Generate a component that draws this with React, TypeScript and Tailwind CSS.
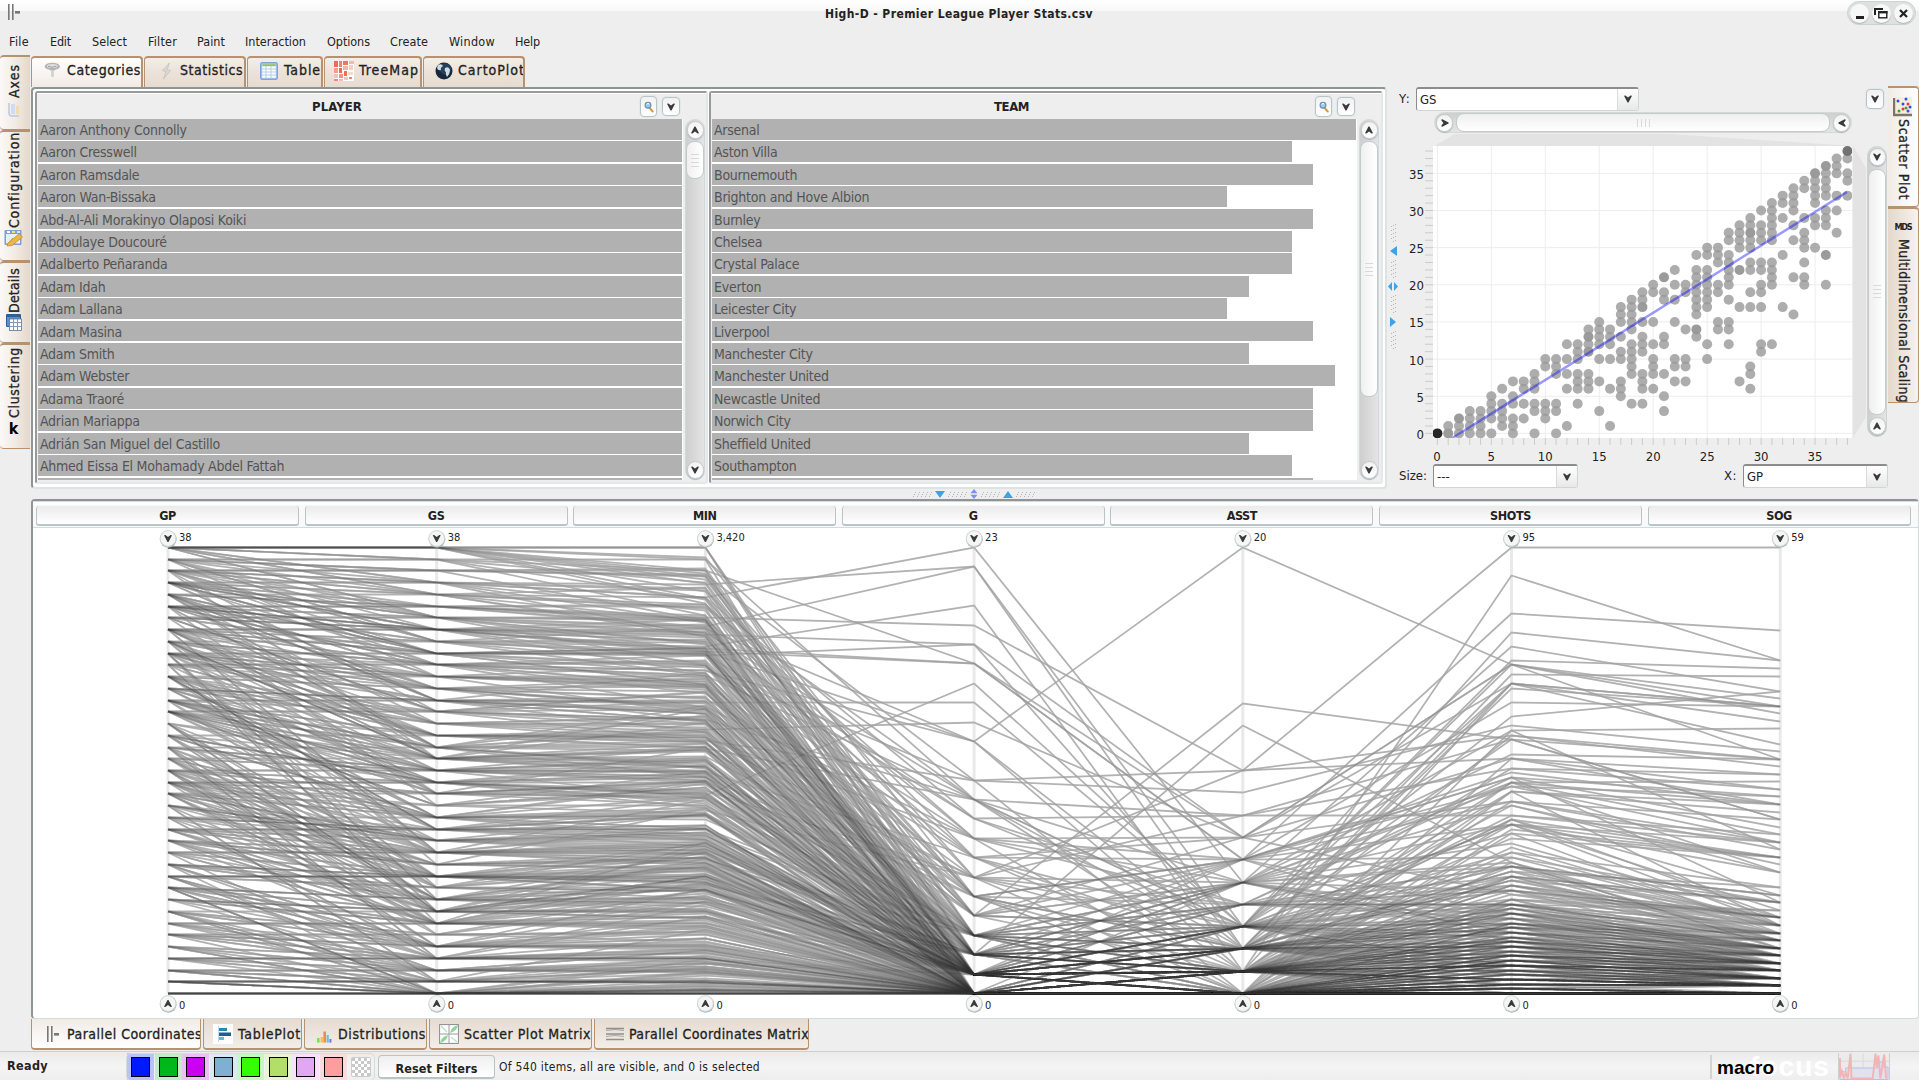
import React, { useLayoutEffect, useRef } from "react";

/* ---------- text that keeps a given run length ---------- */
function T({ w, vertical, className = "", children }: { w?: number; vertical?: boolean; className?: string; children: string }) {
  const ref = useRef<HTMLSpanElement>(null);
  useLayoutEffect(() => {
    const el = ref.current;
    if (!el || !w) return;
    el.style.letterSpacing = "0px";
    const box = el.getBoundingClientRect();
    const natural = vertical ? box.height : box.width;
    el.style.letterSpacing = `${(w - natural) / children.length}px`;
  }, [w, vertical, children]);
  return (
    <span ref={ref} className={`inline-block shrink-0 whitespace-nowrap ${className}`}>
      {children}
    </span>
  );
}

/* ---------- data ---------- */
let seed = 20201;
const rnd = () => {
  seed = (seed * 1664525 + 1013904223) % 4294967296;
  return seed / 4294967296;
};

const startsByGames: number[][] = [
  [0], [0, 1], [0, 1, 2], [0, 1, 2, 3], [0, 1, 2, 3], [0, 2, 3, 4, 5], [1, 2, 3, 4, 6],
  [0, 1, 2, 4, 5, 7], [2, 4, 6, 7], [0, 3, 4, 6, 7, 8], [2, 3, 4, 9, 10], [0, 3, 4, 8, 9, 10],
  [1, 6, 8, 10, 12], [4, 6, 7, 8, 10, 11, 12], [6, 7, 8, 11, 12, 13, 14], [3, 7, 10, 12, 13, 14, 15],
  [1, 6, 10, 12, 13, 14], [5, 6, 7, 10, 11, 13, 15, 16, 17], [4, 8, 9, 10, 11, 12, 14, 15, 16, 17, 18],
  [4, 6, 7, 8, 11, 12, 13, 15, 17, 18, 19], [6, 8, 9, 10, 12, 15, 19, 20], [3, 5, 8, 12, 13, 18, 19, 21],
  [7, 9, 10, 15, 18, 20, 22], [7, 9, 10, 14, 19, 20], [13, 14, 16, 17, 18, 19, 20, 21, 22, 24],
  [10, 12, 17, 18, 19, 20, 21, 22, 24, 25], [14, 15, 19, 20, 23, 24, 25],
  [12, 14, 15, 18, 20, 21, 22, 23, 24, 26, 27], [7, 17, 22, 25, 26, 27, 28],
  [6, 8, 9, 17, 19, 22, 23, 25, 26, 27, 28, 29], [11, 12, 17, 19, 20, 22, 23, 26, 27, 28, 30],
  [12, 20, 21, 22, 23, 26, 27, 28, 29, 30, 31], [17, 24, 29, 31, 32], [16, 21, 26, 28, 30, 31, 32, 33],
  [20, 21, 23, 25, 26, 27, 29, 33, 34], [25, 28, 29, 31, 32, 33, 34, 35],
  [20, 24, 28, 29, 30, 32, 33, 34, 35, 36], [27, 30, 32, 35, 36, 37], [32, 34, 35, 37, 38],
];

// games, starts, minutes, goals, assists, shots, shots on goal
type Row = [number, number, number, number, number, number, number];
const leaders: Row[] = [
  [35, 34, 3034, 23, 5, 74, 40], [36, 35, 3138, 22, 3, 77, 44], [38, 32, 2812, 22, 2, 66, 38],
  [33, 30, 2660, 20, 1, 89, 44], [34, 33, 2884, 19, 10, 95, 59], [29, 29, 2589, 18, 2, 68, 42],
  [35, 31, 2753, 18, 7, 66, 38], [38, 37, 3241, 17, 6, 81, 48], [31, 31, 2645, 17, 7, 70, 38],
  [32, 31, 2625, 17, 6, 62, 38], [25, 18, 1520, 16, 3, 59, 40], [34, 25, 2231, 15, 3, 71, 43],
  [34, 21, 2027, 14, 7, 70, 39], [35, 32, 2800, 13, 20, 70, 31], [36, 30, 2620, 13, 1, 66, 36],
  [30, 28, 2480, 13, 2, 65, 38], [33, 21, 1942, 11, 9, 57, 32], [30, 28, 2479, 11, 10, 55, 31],
  [38, 38, 3175, 4, 13, 54, 23], [36, 34, 3111, 2, 12, 28, 8], [27, 22, 1950, 6, 10, 50, 29],
  [37, 31, 2766, 10, 3, 70, 37], [36, 36, 3210, 11, 0, 56, 35], [38, 38, 3330, 10, 8, 54, 31],
  [37, 34, 2960, 10, 5, 51, 31], [33, 28, 2440, 10, 2, 55, 30], [31, 24, 2100, 10, 3, 48, 27],
  [29, 22, 1880, 10, 1, 45, 28], [38, 35, 3040, 9, 4, 46, 26], [32, 31, 2700, 9, 8, 48, 29],
  [37, 30, 2600, 9, 3, 66, 33], [30, 26, 2200, 8, 4, 45, 21], [34, 33, 2870, 8, 0, 43, 25],
  [28, 22, 1960, 8, 6, 41, 23], [35, 29, 2500, 8, 5, 44, 26], [38, 34, 2980, 8, 7, 50, 25],
  [27, 26, 2260, 7, 6, 46, 22], [33, 31, 2790, 7, 3, 54, 23], [24, 19, 1700, 7, 2, 38, 21],
  [36, 35, 3090, 7, 7, 41, 20], [29, 27, 2380, 6, 8, 38, 20], [22, 18, 1560, 6, 3, 36, 18],
  [31, 20, 1860, 6, 2, 43, 24], [37, 36, 3200, 6, 5, 40, 16], [26, 15, 1400, 6, 4, 34, 18],
];

function makeRows(): Row[] {
  const rows: Row[] = [...leaders];
  const add = (gp: number, gs: number) => {
    let min = gs * (78 + rnd() * 12) + (gp - gs) * (6 + rnd() * 26);
    if (gp === 0) min = 0;
    if (gs === gp && rnd() < 0.2) min = gp * 90;
    min = Math.min(3420, Math.round(min));
    const k = min / 3420;
    const role = rnd();
    let shots: number, goals: number, ast: number;
    if (role < 0.14) {
      shots = 0;
      goals = 0;
      ast = rnd() < 0.06 ? 1 : 0;
    } else if (role < 0.5) {
      shots = k * (5 + rnd() * 22);
      goals = shots * rnd() * 0.18;
      ast = k * rnd() * rnd() * 6;
    } else if (role < 0.82) {
      shots = k * (10 + rnd() * 36);
      goals = shots * rnd() * 0.18;
      ast = k * rnd() * 8;
    } else {
      shots = k * (26 + rnd() * 34) + rnd() * 2;
      goals = shots * (0.04 + rnd() * 0.15);
      ast = k * rnd() * 8;
    }
    shots = Math.round(shots);
    const sog = Math.round(shots * (0.2 + rnd() * 0.36));
    rows.push([gp, gs, min, Math.round(Math.min(goals, sog)), Math.round(ast), shots, sog]);
  };
  startsByGames.forEach((list, gp) => list.forEach((gs) => add(gp, gs)));
  for (let i = 0; i < 16; i++) add(0, 0);
  for (let i = 0; i < 10; i++) add(1, i < 6 ? 0 : 1);
  for (let i = 0; i < 9; i++) add(38, 38);
  while (rows.length < 540) {
    const gp = 1 + Math.floor(rnd() * 38);
    const list = startsByGames[gp];
    const pick = rnd() < 0.35 ? Math.floor(list.length * (0.55 + rnd() * 0.45)) : Math.floor(rnd() * list.length);
    add(gp, list[Math.min(pick, list.length - 1)]);
  }
  return rows;
}
const rows = makeRows();

const players = [
  "Aaron Anthony Connolly", "Aaron Cresswell", "Aaron Ramsdale", "Aaron Wan-Bissaka",
  "Abd-Al-Ali Morakinyo Olaposi Koiki", "Abdoulaye Doucouré", "Adalberto Peñaranda", "Adam Idah",
  "Adam Lallana", "Adam Masina", "Adam Smith", "Adam Webster", "Adama Traoré", "Adrian Mariappa",
  "Adrián San Miguel del Castillo", "Ahmed Eissa El Mohamady Abdel Fattah", "",
].map((name) => ({ name, value: 30 }));

const teams = [
  ["Arsenal", 30], ["Aston Villa", 27], ["Bournemouth", 28], ["Brighton and Hove Albion", 24],
  ["Burnley", 28], ["Chelsea", 27], ["Crystal Palace", 27], ["Everton", 25], ["Leicester City", 24],
  ["Liverpool", 28], ["Manchester City", 25], ["Manchester United", 29], ["Newcastle United", 28],
  ["Norwich City", 28], ["Sheffield United", 25], ["Southampton", 27], ["", 28],
].map(([name, value]) => ({ name: name as string, value: value as number }));

/* ---------- small widgets ---------- */
const Chevron = ({ className = "" }: { className?: string }) => (
  <svg viewBox="0 0 8 8" className={`h-2 w-2 ${className}`}>
    <path d="M0 0.8 L1.4 0.4 L4 2.4 L6.6 0.4 L8 0.8 L4.5 7.6 L3.5 7.6 Z" fill="#3a3a3a" />
  </svg>
);

const Round = ({ turn }: { turn: string }) => (
  <div className="flex h-[18px] w-[17px] shrink-0 items-center justify-center rounded-full border border-[#c3c9c9] bg-gradient-to-b from-[#f2f2f2] to-white shadow-[0_1px_1px_#a9b5b5]">
    <Chevron className={turn} />
  </div>
);

const Magnifier = () => (
  <svg viewBox="0 0 10 12" className="h-3 w-[10px]">
    <path d="M5.4 6.6 L8.6 10.4" stroke="#d99b3c" strokeWidth="2.2" strokeLinecap="round" />
    <circle cx="4" cy="4.2" r="2.9" fill="#8fcdf2" stroke="#6f8ea3" strokeWidth="1.1" />
    <path d="M2.6 3.6 Q3.4 2.2 5 2.8" stroke="#fff" strokeWidth="1" fill="none" />
  </svg>
);

const SquareButton = ({ children, className }: { children: React.ReactNode; className: string }) => (
  <div className={`flex items-center justify-center rounded-[4px] border border-[#b9c4c4] bg-gradient-to-b from-[#f1f1f1] to-white shadow-[0_0_0_1px_#e3e9e9] ${className}`}>
    {children}
  </div>
);

const GripH = () => (
  <div className="flex flex-col gap-[3px]">
    {[0, 1, 2, 3].map((i) => (
      <div key={i} className="h-px w-2 bg-[#d9d9d9]" />
    ))}
  </div>
);

function VScroll({ thumb, className = "" }: { thumb: string; className?: string }) {
  return (
    <div className={`flex w-[20px] flex-col items-center justify-between rounded-full border border-[#d3d8d8] bg-gradient-to-r from-[#cfcfcf] to-[#e4e4e4] pt-px ${className}`}>
      <Round turn="rotate-180" />
      <div className="flex w-full flex-1 flex-col items-center pt-[2px]">
        <div className={`flex w-[18px] items-center justify-center rounded-[8px] border border-[#c3caca] bg-gradient-to-r from-[#f0f0f0] to-white ${thumb}`}>
          <GripH />
        </div>
      </div>
      <Round turn="" />
    </div>
  );
}

function Combo({ value, className }: { value: string; className: string }) {
  return (
    <div className={`flex rounded-[3px] border border-t-2 border-[#d0d6d6] border-l-[#8c8c8c] border-t-[#8c8c8c] bg-white ${className}`}>
      <div className="flex-1 overflow-hidden pl-[3px] text-[13px] leading-[21px]">{value}</div>
      <div className="flex w-[21px] items-center justify-center border-l border-[#d6dcdc] bg-gradient-to-b from-white to-[#e8e8e8] pr-px">
        <Chevron />
      </div>
    </div>
  );
}

function ListPanel({ title, data, thumb, className }: { title: string; data: { name: string; value: number }[]; thumb: string; className: string }) {
  return (
    <div className={`flex flex-col rounded-[3px] border-2 border-[#e3e9e9] border-l-[#9a9a9a] border-t-[#9a9a9a] bg-[#eee] ${className}`}>
      <div className="flex h-[26px] shrink-0 items-center border-t border-white">
        <div className="flex flex-1 justify-center pr-[3px] text-[13px] font-bold">
          <T w={title === "PLAYER" ? 50 : 35}>{title}</T>
        </div>
        <SquareButton className="mr-[5px] h-[21px] w-[17px]"><Magnifier /></SquareButton>
        <SquareButton className="mr-[26px] h-[19px] w-[18px]"><Chevron /></SquareButton>
      </div>
      <div className="flex h-[361px]">
        <div className="ml-px h-full w-[645px] overflow-hidden bg-white">
          {data.map((d, i) => (
            <div key={i} className="h-[22.42px] pb-[1.6px]">
              <div
                className="h-full whitespace-nowrap bg-[#b1b1b1] pl-[2px] text-[14px] leading-[22px] tracking-[-0.25px] text-[#545454]"
                style={{ width: `${(d.value / 30) * 644}px` }}
              >
                {d.name}
              </div>
            </div>
          ))}
        </div>
        <VScroll className="ml-[2px] h-[361px]" thumb={thumb} />
      </div>
    </div>
  );
}

/* ---------- tabs ---------- */
const tabEdge = "border-[#b8926f]";

function TopTab({ label, w, active, icon, className }: { label: string; w: number; active?: boolean; icon: React.ReactNode; className: string }) {
  return (
    <div className={`flex h-[31px] items-center overflow-hidden rounded-t-[4px] border border-b-0 border-t-2 border-r-2 pb-[4px] ${tabEdge} ${active ? "bg-gradient-to-b from-white to-[#f1ebe5]" : "bg-gradient-to-b from-[#f3eee9] via-[#ebe2d9] to-[#e6dbd0]"} ${className}`}>
      {icon}
      <T w={w} className="text-[14px] text-[#222] [-webkit-text-stroke:0.3px_#222]">{label}</T>
    </div>
  );
}

function BottomTab({ label, w, active, icon, className }: { label: string; w: number; active?: boolean; icon: React.ReactNode; className: string }) {
  return (
    <div className={`flex h-[31px] items-center overflow-hidden rounded-b-[4px] border border-t-0 border-b-2 ${tabEdge} ${active ? "bg-gradient-to-b from-[#f1ebe5] to-white" : "bg-gradient-to-b from-[#e6dbd0] to-[#f3eee9]"} ${className}`}>
      {icon}
      <T w={w} className="pt-px text-[14px] text-[#222] [-webkit-text-stroke:0.3px_#222]">{label}</T>
    </div>
  );
}

function LeftTab({ label, w, icon, className }: { label: string; w: number; icon: React.ReactNode; className: string }) {
  return (
    <div className={`flex w-[30px] flex-col items-center rounded-l-[4px] border-y-2 border-b ${tabEdge} bg-gradient-to-r from-[#fbf9f7] via-[#f1ebe4] to-[#e4d8cb] pr-[3px] ${className}`}>
      <T vertical w={w} className="rotate-180 text-[14px] leading-[20px] text-[#222] [-webkit-text-stroke:0.3px_#222] [writing-mode:vertical-rl]">{label}</T>
      {icon}
    </div>
  );
}

/* ---------- icons ---------- */
const AppIcon = ({ className = "" }: { className?: string }) => (
  <svg viewBox="0 0 14 16" className={`h-4 w-[14px] ${className}`} fill="#777">
    <rect x="1" width="1.6" height="16" /><rect x="5" width="1.6" height="16" /><rect x="8" y="7" width="5" height="2.6" />
  </svg>
);
const FunnelIcon = () => (
  <svg viewBox="0 0 18 18" className="ml-[11px] mr-[6px] h-[18px] w-[18px] shrink-0">
    <path d="M4 5 L8.2 9.5 V14.5 Q9.5 16 10.8 14.5 V9.5 L15 5 Z" fill="#d0d0d0" />
    <ellipse cx="9.3" cy="4.4" rx="7.6" ry="3.6" fill="#b4b4b4" /><ellipse cx="9.3" cy="4" rx="5.4" ry="2" fill="#dedede" /><path d="M5 4.2 Q9 6.4 13.4 4.2" stroke="#999" strokeWidth="0.9" fill="none" />
  </svg>
);
const BoltIcon = () => (
  <svg viewBox="0 0 16 18" className="ml-[13px] mr-[6px] h-[18px] w-4 shrink-0">
    <path d="M11.5 1 L4.5 8.5 L8 9.5 L5.5 17 L12.5 8.5 L9 7.8 Z" fill="#dcd9d5" stroke="#c3c0bc" strokeWidth="0.8" />
  </svg>
);
const TableIcon = () => (
  <svg viewBox="0 0 18 18" className="h-[18px] w-[18px] shrink-0">
    <rect x="0.5" y="0.5" width="17" height="17" rx="1.5" fill="#9dbde8" stroke="#7fa4d8" />
    <rect x="2.2" y="2.2" width="13.6" height="13.6" fill="#fff" /><rect x="2.2" y="2.2" width="13.6" height="2" fill="#8fbf6a" />
    <path d="M2 7H16M2 10H16M2 13H16M6 4V16M11 4V16" stroke="#b5cdee" strokeWidth="1" />
  </svg>
);
const TreeMapIcon = () => (
  <svg viewBox="0 0 20 20" className="ml-[9px] mr-[5px] h-5 w-5 shrink-0">
    <rect width="20" height="20" fill="#fff" />
    {([[0, 0, 4, 6, "#ef6a55"], [5, 0, 3, 6, "#f38370"], [9, 0, 5, 4, "#f07562"], [15, 0, 5, 3, "#f9b8ae"], [0, 7, 4, 5, "#f59e90"], [5, 7, 3, 5, "#ef6a55"], [9, 5, 5, 4, "#f8b3a8"], [15, 4, 4, 5, "#faccc4"], [0, 13, 4, 4, "#f9beb4"], [5, 13, 4, 4, "#f49283"], [10, 10, 3, 5, "#ee6e5b"], [14, 11, 5, 3, "#fbd9d3"], [0, 18, 4, 2, "#f18676"], [5, 18, 4, 2, "#f8bab0"], [10, 16, 4, 3, "#f9c4bb"], [15, 16, 3, 2, "#f18171"]] as [number, number, number, number, string][]).map(([x, y, w, h, c], i) => (
      <rect key={i} x={x} y={y} width={w} height={h} fill={c} />
    ))}
  </svg>
);
const GlobeIcon = () => (
  <svg viewBox="0 0 18 18" className="ml-[11px] mr-[5px] h-[18px] w-[18px] shrink-0">
    <circle cx="9" cy="9" r="8.5" fill="#16283d" /><circle cx="10.5" cy="7" r="5.8" fill="#2d4a66" opacity=".7" />
    <path d="M3 3 Q7 1 8 4 Q5 6 6 8 Q3 9 2 6Z M10 6 Q14 4 15 8 Q15 12 12 15 Q10 12 11 10 Q9 9 10 6Z" fill="#cfdbe2" />
  </svg>
);
const AxesIcon = () => (
  <svg viewBox="0 0 12 14" className="mt-[5px] h-[14px] w-3"><path d="M1 0V10Q1 13 4 13H11" stroke="#b9c9e6" strokeWidth="1.5" fill="none" /><rect x="3" y="1" width="4" height="10" fill="#d3dcee" /><rect x="8" y="3" width="3" height="8" fill="#f1dcae" /></svg>
);
const ConfigIcon = () => (
  <svg viewBox="0 0 19 18" className="mt-px h-[18px] w-[19px]">
    <rect x="0.5" y="1" width="17" height="15" rx="1" fill="#7f9fd6" /><rect x="2" y="5" width="14" height="9.5" fill="#e8eefb" />
    <rect x="3" y="2" width="3" height="2" fill="#fff" /><rect x="8" y="2" width="3" height="2" fill="#fbe36a" /><rect x="13" y="2" width="3" height="2" fill="#d7e2f7" />
    <path d="M4 14 L15 5 L18.5 8 L8 16.5 L3 17Z" fill="#edb64b" stroke="#c98d29" strokeWidth=".8" /><path d="M2 16 L9 9" stroke="#c9a04b" />
  </svg>
);
const DetailsIcon = () => (
  <svg viewBox="0 0 16 17" className="mt-px h-[17px] w-4">
    <rect x="0" y="0" width="15" height="13" rx="1" fill="#2f5f94" /><rect x="1" y="3" width="13" height="9" fill="#5f8fc4" />
    <rect x="3.5" y="5" width="12" height="11.5" fill="#fff" stroke="#5a748f" strokeWidth=".8" /><path d="M3.5 8.5H15.5M3.5 12.5H15.5M7.5 5V16M11.5 5V16" stroke="#7f9ab8" />
  </svg>
);
const ScatterIcon = () => (
  <svg viewBox="0 0 20 20" className="mt-[9px] h-5 w-5">
    <rect x="2" y="0" width="17" height="17" fill="#f4eede" /><path d="M1 1V18H19" stroke="#7c746a" strokeWidth="2.4" fill="none" />
    <g fill="#3b49ea"><circle cx="5" cy="4" r="1.5" /><circle cx="13" cy="2" r="1.5" /><circle cx="10" cy="7" r="1.5" /><circle cx="17" cy="10" r="1.5" /></g>
    <g fill="#ea3b33"><circle cx="15" cy="7" r="1.5" /><circle cx="10" cy="12" r="1.5" /></g><g fill="#3aa23c"><circle cx="6" cy="14" r="1.5" /><circle cx="13" cy="11" r="1.5" /></g><circle cx="15" cy="14" r="1.5" fill="#3b49ea" />
  </svg>
);
const TablePlotIcon = () => (
  <svg viewBox="0 0 20 20" className="ml-[9px] mr-[5px] h-5 w-5 shrink-0"><rect width="20" height="20" fill="#fdfdfd" /><rect x="5" y="2" width="1" height="16" fill="#bfe0ea" /><rect x="6" y="4" width="8" height="3" fill="#2a87b0" /><rect x="6" y="8.5" width="12" height="3.5" fill="#1c5f94" /><rect x="6" y="13" width="5" height="3" fill="#63b9cf" /></svg>
);
const DistIcon = () => (
  <svg viewBox="0 0 16 16" className="ml-[11px] mr-[6px] mt-1 h-4 w-4 shrink-0"><rect x="1" y="10" width="2.6" height="4.6" fill="#74e74b" /><rect x="4.6" y="9" width="2.6" height="5.6" fill="#f4c63c" /><rect x="7.4" y="3.5" width="2.6" height="11" fill="#f08a4f" /><rect x="10.6" y="7" width="2.2" height="7.6" fill="#5cc6e8" /><rect x="13.4" y="11" width="2" height="3.6" fill="#7f6fe4" /></svg>
);
const MatrixIcon = () => (
  <svg viewBox="0 0 20 20" className="ml-[9px] mr-[5px] h-5 w-5 shrink-0"><rect x=".6" y=".6" width="18.8" height="18.8" fill="#fff" stroke="#8b8b8b" /><path d="M0 10H20M10 0V20" stroke="#9a9a9a" /><path d="M11 9Q12 3 19 1Q18 7 11 9Z M1 19Q2 13 9 11Q8 17 1 19Z" fill="#8fd49a" /><path d="M2 2L8 8M12 13L18 18" stroke="#bfe6c5" strokeWidth="1.6" /></svg>
);
const LinesIcon = () => (
  <svg viewBox="0 0 18 14" className="ml-[11px] mr-[5px] h-[14px] w-[18px] shrink-0" stroke="#8f8f8f"><path d="M0 1.5H18M0 7H18M0 12.5H18" strokeWidth="1.6" /><path d="M0 3.5L9 2.5L18 3.5M0 9.5L9 8.5L18 9.5" strokeWidth=".7" fill="none" /></svg>
);

/* ---------- scatter plot ---------- */
const dotFill = (n: number) => (n >= 8 ? "#1a1a1a" : n >= 3 ? "#6a6a6a" : n === 2 ? "#969696" : "#989898");

function Scatter() {
  const X = (v: number) => 38.4 + v * 10.79;
  const Y = (v: number) => 299.4 - v * 7.43;
  const counts = new Map<string, number>();
  startsByGames.forEach((l, gp) => l.forEach((gs) => counts.set(`${gp},${gs}`, 1)));
  [[38, 38, 3], [36, 36, 2], [35, 35, 2], [1, 0, 2], [2, 2, 2], [19, 17, 2], [24, 14, 2], [28, 22, 2], [21, 21, 2], [0, 0, 8], [14, 11, 2], [36, 24, 2], [14, 13, 2], [29, 27, 2]].forEach(([a, b, c]) => counts.set(`${a},${b}`, c));
  const units = Array.from({ length: 39 }, (_, i) => i);
  const fives = units.filter((u) => u % 5 === 0);
  return (
    <svg width="468" height="330" viewBox="0 0 468 330" className="block shrink-0">
      <polygon points="56,0 271,0 454,12 35,12" fill="#e3e3e3" />
      <polygon points="454,12 467,34 467,283 454,304" fill="#e3e3e3" />
      <rect x="34" y="12" width="419" height="292" fill="#fff" />
      {fives.map((u) => (
        <g key={u} stroke="#ededed">
          <line x1={X(u)} x2={X(u)} y1="12" y2="304" />
          <line x1="34" x2="453" y1={Y(u)} y2={Y(u)} />
        </g>
      ))}
      {units.map((u) => (
        <g key={u} stroke="#cbcbcb">
          <line x1={X(u)} x2={X(u)} y1="304" y2="311" />
          <line x1="26" x2="34" y1={Y(u)} y2={Y(u)} />
        </g>
      ))}
      <svg x="34" y="12" width="419" height="292" viewBox="34 12 419 292">
        {[...counts].map(([key, n]) => {
          const [gp, gs] = key.split(",").map(Number);
          return <circle key={key} cx={X(gp)} cy={Y(gs)} r="5" fill={dotFill(n)} fillOpacity={n === 1 ? 0.8 : 0.95} />;
        })}
        <line x1="50" y1="306" x2="448" y2="58" stroke="#0000ff" strokeOpacity=".4" strokeWidth="2.4" />
      </svg>
      <g fontSize="13" fill="#222">
        {fives.map((u) => (
          <g key={u}>
            <text x={u === 0 ? 38 : X(u)} y="327" textAnchor="middle">{u}</text>
            <text x="25" y={Y(u) + 5.5} textAnchor="end">{u}</text>
          </g>
        ))}
      </g>
    </svg>
  );
}

/* ---------- parallel coordinates ---------- */
const axes = [
  { name: "GP", max: 38, label: "38" }, { name: "GS", max: 38, label: "38" }, { name: "MIN", max: 3420, label: "3,420" },
  { name: "G", max: 23, label: "23" }, { name: "ASST", max: 20, label: "20" }, { name: "SHOTS", max: 95, label: "95" }, { name: "SOG", max: 59, label: "59" },
];

function Parallel() {
  const X = (i: number) => 135 + i * 268.7;
  const Y = (v: number, max: number) => Math.round(465 - (v / max) * 446);
  const lines = rows.map((r) => r.map((v, i) => `${X(i)},${Y(v, axes[i].max) + 0.5}`).join(" "));
  const pin = (x: number, y: number, up: boolean) => (
    <g transform={`translate(${x},${y})`}>
      <circle cx="0.3" cy="0.8" r="8.4" fill="#aab8b8" /><circle r="7.9" fill="#f5f5f5" stroke="#cdd3d3" strokeWidth="0.9" />
      <path d="M-4 -3.2 L-2.6 -3.6 L0 -1.6 L2.6 -3.6 L4 -3.2 L0.5 3.6 L-0.5 3.6 Z" fill="#3a3a3a" transform={up ? "rotate(180)" : ""} />
    </g>
  );
  return (
    <svg width="1883" height="488" viewBox="0 0 1883 488" className="block">
      {axes.map((a, i) => (
        <rect key={a.name} x={X(i) - 1.5} y="14" width="3" height="452" fill="#e9e9e9" />
      ))}
      <g fill="none" stroke="#c2c2c2" strokeWidth="1.8">
        {lines.map((points, k) => (
          <polyline key={k} points={points} />
        ))}
      </g>
      <g fill="none" stroke="#3c3c3c" strokeOpacity=".12" strokeWidth="1.4">
        {lines.map((points, k) => (
          <polyline key={k} points={points} />
        ))}
      </g>
      {axes.map((a, i) => (
        <g key={a.name}>
          {pin(X(i), 10.5, false)}
          {pin(X(i), 475.5, true)}
          <text x={X(i) + 11} y="13" fontSize="11" fill="#222">{a.label}</text>
          <text x={X(i) + 11} y="481" fontSize="11" fill="#222">0</text>
        </g>
      ))}
    </svg>
  );
}

/* ---------- splitters ---------- */
const Dots = ({ vertical }: { vertical?: boolean }) => (
  <svg width={vertical ? 7 : 19} height={vertical ? 18 : 7} fill="#b5b5b5">
    {[0, 1, 2, 3, 4].map((i) =>
      [0, 1, 2].map((j) => (
        <rect key={`${i}${j}`} x={vertical ? 1 + j * 2 : i * 4 + 2 - j} y={vertical ? i * 4 + 2 - j : 1 + j * 2} width="1" height="1" />
      )),
    )}
  </svg>
);

const swatches = [
  "bg-[#0019ff] outline-[#b9c3f6]", "bg-[#00b81c] outline-[#c2ecc8]", "bg-[#cc00f0] outline-[#edbdf6]",
  "bg-[#7fb0d4] outline-[#dbe9f3]", "bg-[#33ff00] outline-[#c8f8bb]", "bg-[#b2df6a] outline-[#e8f5d3]",
  "bg-[#e3a6f3] outline-[#f6e3fb]", "bg-[#ff9e9e] outline-[#fbdcdc]",
];

export default function App() {
  return (
    <div
      className="flex h-[1080px] w-[1919px] flex-col overflow-hidden bg-[#eeeeee] text-[#222] [font-family:'DejaVu_Sans_Condensed','DejaVu_Sans',sans-serif] [font-stretch:condensed]"
    >
      {/* title bar */}
      <div className="flex h-[26px] shrink-0 items-start justify-between bg-[linear-gradient(to_bottom,#fff_0,#f8f8f8_11px,#eee_11px)]">
        <AppIcon className="ml-[7px] mt-1" />
        <div className="ml-[50px] mt-[5px] text-[12px] font-bold"><T w={268}>High-D - Premier League Player Stats.csv</T></div>
        <div className="mr-[3px] mt-px flex h-[24px] w-[69px] items-center justify-around rounded-full border border-[#ccd3d3] bg-[#e0e0e0] px-px">
          <div className="flex h-[19px] w-[19px] items-center justify-center rounded-full bg-[#f8f8f8] pt-2 shadow-[0_1px_1px_#a9b5b5]"><div className="h-[3px] w-2 bg-[#222]" /></div>
          <div className="flex h-[19px] w-[19px] items-center justify-center rounded-full bg-[#f8f8f8] shadow-[0_1px_1px_#a9b5b5]">
            <svg width="14" height="11" viewBox="0 0 14 11"><path d="M1 7V1H9" stroke="#222" strokeWidth="2" fill="none" /><rect x="4.8" y="3.8" width="8" height="6" fill="#fff" stroke="#222" strokeWidth="1.4" /><rect x="4.1" y="3" width="9.4" height="2.4" fill="#222" /></svg>
          </div>
          <div className="flex h-[19px] w-[19px] items-center justify-center rounded-full bg-[#f8f8f8] shadow-[0_1px_1px_#a9b5b5]">
            <svg width="9" height="9" viewBox="0 0 9 9"><path d="M1 1L8 8M8 1L1 8" stroke="#222" strokeWidth="2.2" /></svg>
          </div>
        </div>
      </div>

      {/* menu */}
      <div className="flex h-[29px] shrink-0 items-center pl-[9px] pt-[3px] text-[12.5px] leading-[26px]">
        <T w={20} className="mr-[21px]">File</T>
        <T w={21} className="mr-[21px]">Edit</T>
        <T w={35} className="mr-[21px]">Select</T>
        <T w={29} className="mr-[20px]">Filter</T>
        <T w={28} className="mr-[20px]">Paint</T>
        <T w={61} className="mr-[21px]">Interaction</T>
        <T w={43} className="mr-[20px]">Options</T>
        <T w={38} className="mr-[21px]">Create</T>
        <T w={46} className="mr-[20px]">Window</T>
        <T w={25}>Help</T>
      </div>

      {/* upper area */}
      <div className="flex h-[434px] shrink-0">
        <div className="flex w-[31px] shrink-0 flex-col">
          <LeftTab label="Axes" w={34} className="h-[75px] pt-[7px]" icon={<AxesIcon />} />
          <LeftTab label="Configuration" w={96} className="h-[131px]" icon={<ConfigIcon />} />
          <LeftTab label="Details" w={45} className="h-[82px] pt-[5px]" icon={<DetailsIcon />} />
          <LeftTab label="Clustering" w={71} className="h-[106px] pt-[2px]" icon={<span className="text-[16px] leading-[22px] font-bold text-black">k</span>} />
        </div>

        <div className="flex w-[1356px] shrink-0 flex-col">
          <div className="flex h-[32px] shrink-0 items-start gap-px pt-px">
            <TopTab active label="Categories" w={74} className="w-[112px]" icon={<FunnelIcon />} />
            <TopTab label="Statistics" w={63} className="w-[102px]" icon={<BoltIcon />} />
            <TopTab label="Table" w={37} className="w-[76px]" icon={<div className="ml-[12px] mr-[6px] flex"><TableIcon /></div>} />
            <TopTab label="TreeMap" w={60} className="w-[98px]" icon={<TreeMapIcon />} />
            <TopTab label="CartoPlot" w={67} className="w-[102px]" icon={<GlobeIcon />} />
          </div>
          <div className="flex h-[402px] gap-px rounded-[4px] border-2 border-[#dde3e3] border-l-[#8f9494] border-t-[#8f9494] bg-white pb-[3px] pl-[2px] pr-[2px] pt-[2px]">
            <ListPanel title="PLAYER" data={players} thumb="h-[38px]" className="w-[674px]" />
            <ListPanel title="TEAM" data={teams} thumb="h-[256px]" className="w-[675px]" />
          </div>
        </div>

        <div className="flex w-[12px] shrink-0 flex-col items-center gap-[4px] pt-[169px]">
          <Dots vertical />
          <svg width="7" height="10"><path d="M7 0V10L0 5Z" fill="#3fa2e6" /></svg>
          <Dots vertical />
          <svg width="10" height="9" className="-ml-px"><path d="M4 0V9L0 4.5ZM6 0V9L10 4.5Z" fill="#3fa2e6" /></svg>
          <Dots vertical />
          <svg width="7" height="10"><path d="M0 0V10L6 5Z" fill="#3fa2e6" /></svg>
          <Dots vertical />
        </div>

        {/* scatter panel */}
        <div className="flex w-[489px] shrink-0 flex-col pt-[31px]">
          <div className="flex h-[25px] items-center">
            <T w={12} className="mr-[5px] text-[13px]">Y:</T>
            <Combo value="GS" className="h-[24px] w-[223px]" />
            <SquareButton className="ml-[227px] h-[20px] w-[18px]"><Chevron /></SquareButton>
          </div>
          <div className="ml-[35px] mt-px flex h-[21px] w-[418px] items-center justify-between rounded-full border border-[#d3d8d8] bg-gradient-to-b from-[#cfcfcf] to-[#e4e4e4] px-px">
            <Round turn="-rotate-90" />
            <div className="flex h-[19px] w-[374px] items-center justify-center gap-[3px] rounded-[8px] border border-[#c3caca] bg-gradient-to-b from-[#efefef] to-white">
              {[0, 1, 2, 3].map((i) => (
                <div key={i} className="h-2 w-px bg-[#d9d9d9]" />
              ))}
            </div>
            <Round turn="rotate-90" />
          </div>
          <div className="mt-px flex h-[330px]">
            <Scatter />
            <div className="mt-[12px] flex h-[291px] w-[20px] flex-col items-center justify-between rounded-full border border-[#cdd3d3] bg-gradient-to-r from-[#cfcfcf] to-[#e4e4e4] py-px">
              <Round turn="" />
              <div className="flex h-[246px] w-[18px] items-center justify-center rounded-[8px] border border-[#c3caca] bg-gradient-to-r from-[#efefef] to-white"><GripH /></div>
              <Round turn="rotate-180" />
            </div>
          </div>
          <div className="flex h-[24px] items-center">
            <T w={28} className="mr-[6px] text-[13px]">Size:</T>
            <Combo value="---" className="h-[24px] w-[145px]" />
            <T w={13} className="ml-[146px] mr-[6px] text-[13px]">X:</T>
            <Combo value="GP" className="h-[24px] w-[145px]" />
          </div>
        </div>

        <div className="flex w-[31px] shrink-0 flex-col pt-[31px]">
          <div className={`flex h-[121px] w-[31px] flex-col items-center rounded-r-[4px] border border-l-0 border-t-2 ${tabEdge} bg-gradient-to-r from-[#f1ebe5] to-white`}>
            <ScatterIcon />
            <T vertical w={81} className="ml-[2px] mt-[2px] text-[14px] leading-[20px] [-webkit-text-stroke:0.3px_#222] [writing-mode:vertical-rl]">Scatter Plot</T>
          </div>
          <div className={`flex h-[196px] w-[31px] flex-col items-center rounded-r-[4px] border border-l-0 border-t-2 ${tabEdge} bg-gradient-to-r from-[#e4d8cb] to-[#f6f2ee]`}>
            <T w={17} className="mt-[13px] text-[9px] leading-[10px] font-bold">MDS</T>
            <T vertical w={164} className="ml-[2px] mt-[7px] text-[14px] leading-[20px] [-webkit-text-stroke:0.3px_#222] [writing-mode:vertical-rl]">Multidimensional Scaling</T>
          </div>
        </div>
      </div>

      {/* horizontal splitter */}
      <div className="flex h-[10px] shrink-0 items-center gap-[3px] pl-[913px]">
        <Dots />
        <svg width="10" height="7"><path d="M0 0H10L5 7Z" fill="#3fa2e6" /></svg>
        <Dots />
        <svg width="8" height="10"><path d="M0.5 4.3H7.5L4 0ZM0.5 5.7H7.5L4 10Z" fill="#7d8ff0" /></svg>
        <Dots />
        <svg width="10" height="7"><path d="M0 7H10L5 0Z" fill="#3fa2e6" /></svg>
        <Dots />
      </div>

      {/* parallel coordinates */}
      <div className="ml-[31px] flex h-[520px] shrink-0 flex-col rounded-[4px] border border-[#d5dada] border-l-2 border-l-[#8f9494] border-t-2 border-t-[#8f9494] bg-white">
        <div className="flex h-[27px] items-center gap-[5.6px] border-y border-[#d3dcdc] bg-[#f9f9f9] pl-[3px] pt-[3px] shadow-[inset_0_3px_0_#fff]">
          {axes.map((a) => (
            <div key={a.name} className="flex h-[20px] w-[263px] items-center justify-center rounded-[3px] border border-b-2 border-t-0 border-[#b9c5c5] bg-gradient-to-b from-[#ebebeb] to-white pt-[3px] text-[12.5px] font-bold tracking-[-0.4px]">
              {a.name}
            </div>
          ))}
        </div>
        <Parallel />
      </div>

      {/* bottom tabs */}
      <div className="ml-[31px] flex h-[32px] shrink-0 gap-[2px]">
        <BottomTab active label="Parallel Coordinates" w={135} className="w-[170px]" icon={<AppIcon className="ml-[14px] mr-[7px] shrink-0" />} />
        <BottomTab label="TablePlot" w={63} className="w-[99px]" icon={<TablePlotIcon />} />
        <BottomTab label="Distributions" w={88} className="w-[123px]" icon={<DistIcon />} />
        <BottomTab label="Scatter Plot Matrix" w={127} className="w-[163px]" icon={<MatrixIcon />} />
        <BottomTab label="Parallel Coordinates Matrix" w={180} className="w-[215px]" icon={<LinesIcon />} />
      </div>

      {/* status bar */}
      <div className="flex h-[30px] shrink-0 items-center border-t border-[#cfcfcf] bg-gradient-to-b from-[#ebebeb] via-[#f4f4f4] to-[#ededed]">
        <T w={41} className="ml-[7px] text-[12.5px] font-bold">Ready</T>
        <div className="ml-[79px] flex h-[26px] items-center gap-[8.5px] rounded-[4px] pl-[4px] outline outline-1 outline-[#d5dcdc]">
          {swatches.map((s, i) => (
            <div key={i} className={`h-[20px] w-[19px] border border-black outline outline-4 ${s}`} />
          ))}
          <div className="mr-[3px] h-[20px] w-[20px] rounded-[2px] border border-[#ccc] bg-[conic-gradient(#fff_25%,#c9c9c9_0_50%,#fff_0_75%,#c9c9c9_0)] bg-[length:6px_6px]" />
        </div>
        <div className="ml-[4px] mt-px flex h-[24px] w-[117px] items-center justify-center rounded-[4px] border border-b-2 border-[#b9c5c5] bg-gradient-to-b from-[#efefef] to-white pt-[5px] text-[12.5px] font-bold">
          <T w={82}>Reset Filters</T>
        </div>
        <T w={261} className="ml-[4px] text-[12px]">Of 540 items, all are visible, and 0 is selected</T>
        <div className="flex-1" />
        <div className="flex h-[24px] w-[128px] items-center border-l-2 border-[#d4d4d4] pl-[5px] [font-family:'Liberation_Sans',sans-serif] font-bold leading-[24px]">
          <T w={57} className="z-10 pt-[2px] text-[19px] text-black">macro</T>
          <T w={80} className="-ml-[24px] text-[28px] text-white">focus</T>
        </div>
        <svg width="52" height="28" viewBox="0 0 52 28" className="mr-[29px] border-x border-[#cfcfcf]">
          <rect width="52" height="28" fill="#ebebeb" /><path d="M0 8H52M25 0V28" stroke="#dadada" />
          <path d="M1 19H7V15H36L40 15L42 9H46V14H51V27H1Z" fill="#e1e1ef" stroke="#b9b9ee" />
          <path d="M1 5V25L3 18L5 26L7 20L9 26L12 0L13 26H35L38 0L39 14L41 2L43 26L47 1L49 26" fill="none" stroke="#f3b4b4" strokeWidth="2" />
        </svg>
      </div>
    </div>
  );
}
